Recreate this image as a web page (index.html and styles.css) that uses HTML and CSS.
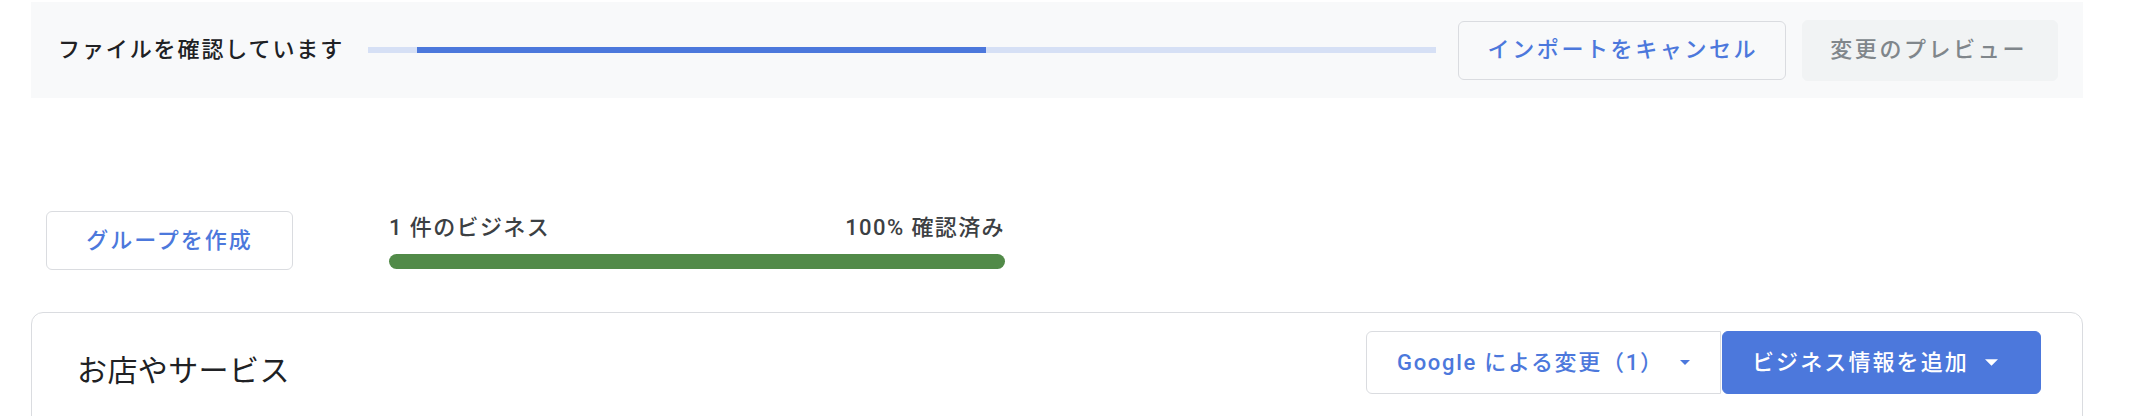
FILE: index.html
```html
<!DOCTYPE html>
<html lang="ja">
<head>
<meta charset="utf-8">
<title>インポート</title>
<link rel="stylesheet" href="styles.css">
</head>
<body>
<div class="page">
  <div class="banner">
    <span class="banner-text">ファイルを確認しています</span>
    <div class="track"><div class="fill"></div></div>
    <button class="btn btn-outline">インポートをキャンセル</button>
    <button class="btn btn-disabled">変更のプレビュー</button>
  </div>

  <div class="summary">
    <button class="btn btn-outline btn-white btn-group">グループを作成</button>
    <div class="verify">
      <div class="verify-labels">
        <span>1 件のビジネス</span>
        <span>100% 確認済み</span>
      </div>
      <div class="verify-bar"></div>
    </div>
  </div>

  <div class="card">
    <div class="card-head">
      <h2 class="card-title">お店やサービス</h2>
      <div class="actions">
        <button class="btn btn-outline btn-white btn-split">Google による変更（1）<svg class="caret caret-blue" viewBox="0 0 10 5" width="10" height="5"><path d="M0 0h10L5 5z"/></svg></button>
        <button class="btn btn-primary">ビジネス情報を追加<svg class="caret caret-white" viewBox="0 0 12 6" width="13" height="7"><path d="M0 0h12L6 6z"/></svg></button>
      </div>
    </div>
  </div>
</div>
</body>
</html>
```

FILE: styles.css
```css
html, body {
  margin: 0;
  padding: 0;
  height: 100%;
  overflow: hidden;
  background: #ffffff;
}

body {
  font-family: "Roboto", "Noto Sans CJK JP", sans-serif;
  color: #202124;
}

.page {
  width: 2052px;
  padding-left: 31px;
}

/* ---------- banner ---------- */
.banner {
  margin-top: 2px;
  height: 96px;
  background: #f8f9fa;
  display: flex;
  align-items: center;
  padding: 0 25px 0 27px;
  box-sizing: border-box;
}

.banner-text {
  font-size: 22px;
  font-weight: 500;
  letter-spacing: 1.9px;
  line-height: 30px;
  color: #202124;
  white-space: nowrap;
}

.track {
  flex: 1;
  height: 6px;
  margin: 0 22px 0 24px;
  background: #d6e0f5;
  display: flex;
}

.fill {
  margin-left: 4.6%;
  width: 53.3%;
  height: 100%;
  background: #4c78dc;
}

/* ---------- buttons ---------- */
.btn {
  font-family: "Roboto", "Noto Sans CJK JP", sans-serif;
  font-size: 22px;
  font-weight: 500;
  letter-spacing: 2.6px;
  line-height: 30px;
  height: 59px;
  padding: 0 27px 0 29px;
  border-radius: 6px;
  box-sizing: border-box;
  display: inline-flex;
  align-items: center;
  white-space: nowrap;
  cursor: pointer;
}

.btn-outline {
  background: #f8f9fa;
  border: 1px solid #dadce0;
  color: #4c78dc;
}

.btn-white {
  background: #ffffff;
}

.btn-disabled {
  margin-left: 16px;
  background: #f1f3f4;
  border: 1px solid #f1f3f4;
  color: #80868b;
  height: 61px;
  padding: 0 30px 0 27px;
}

.btn-group {
  width: 247px;
  justify-content: center;
  padding: 0;
  letter-spacing: 2px;
}

/* ---------- summary ---------- */
.summary {
  margin-top: 113px;
  height: 59px;
  padding-left: 15px;
  display: flex;
  align-items: center;
  gap: 96px;
}

.verify {
  width: 616px;
  display: flex;
  flex-direction: column;
  gap: 11px;
}

.verify-labels {
  display: flex;
  justify-content: space-between;
  font-size: 22px;
  font-weight: 500;
  line-height: 30px;
  letter-spacing: 1.4px;
  color: #3c4043;
}

.verify-bar {
  height: 15px;
  border-radius: 8px;
  background: #518a48;
}

/* ---------- card ---------- */
.card {
  margin-top: 42px;
  border: 1px solid #dadce0;
  border-radius: 12px;
  min-height: 160px;
}

.card-head {
  display: flex;
  justify-content: space-between;
  align-items: flex-start;
  padding: 18px 41px 0 45px;
}

.card-title {
  margin: 20px 0 0;
  font-size: 30px;
  line-height: 40px;
  font-weight: 400;
  letter-spacing: 0.4px;
  color: #202124;
}

.actions {
  display: flex;
  gap: 1px;
}

.btn-split {
  height: 63px;
  width: 355px;
  padding: 0 30px 0 30px;
  justify-content: space-between;
  letter-spacing: 1.7px;
  border-radius: 6px 0 0 6px;
}

.btn-primary {
  height: 63px;
  width: 319px;
  padding: 0 0 0 29px;
  gap: 16px;
  background: #4c78dc;
  border: 1px solid #4c78dc;
  color: #ffffff;
  letter-spacing: 2.1px;
}

.caret {
  flex: none;
}

.caret-blue {
  fill: #4c78dc;
}

.caret-white {
  fill: #ffffff;
}
```
